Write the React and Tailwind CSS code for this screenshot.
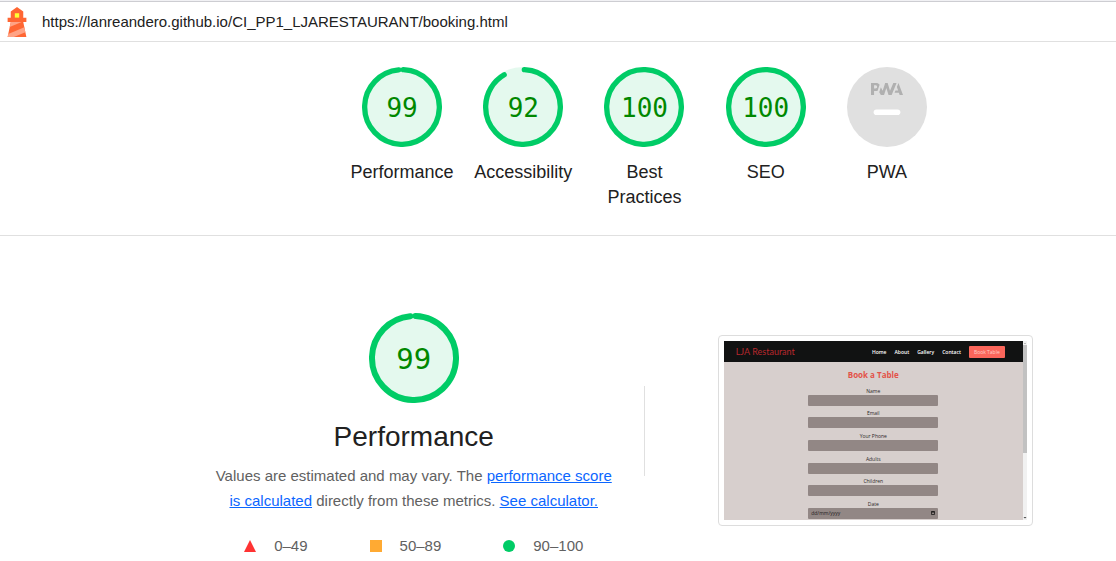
const CIRCUMFERENCE = 2 * Math.PI * 56;

const categories = [
  { label: "Performance", score: 99 },
  { label: "Accessibility", score: 92 },
  { label: "Best Practices", score: 100 },
  { label: "SEO", score: 100 },
];

const fields = [
  { id: "name", label: "Name" },
  { id: "email", label: "Email" },
  { id: "phone", label: "Your Phone" },
  { id: "adults", label: "Adults" },
  { id: "children", label: "Children" },
  { id: "date", label: "Date" },
];

function LighthouseIcon() {
  return (
    <svg viewBox="0 0 48 48" className="size-[30px] shrink-0" aria-hidden="true">
      <path fill="#ff6633" d="m14 7 10-7 10 7v10h5v7h-5l5 24H9l5-24H9v-7h5V7z" />
      <path
        fill="#ffa385"
        d="M31.561 24H14l-1.689 8.105L31.561 24zM18.983 48H9l1.022-4.907L35.723 32.27l1.663 7.98L18.983 48z"
      />
      <path fill="#ffff33" d="M20.5 10h7v7h-7z" />
    </svg>
  );
}

function Gauge({ score, large }) {
  const full = score === 100;
  const arc = full ? CIRCUMFERENCE : (score / 100) * CIRCUMFERENCE - 4;
  return (
    <div className={large ? "grid size-[90px]" : "grid size-20"}>
      <svg viewBox="0 0 120 120" className="col-start-1 row-start-1 size-full" aria-hidden="true">
        <circle cx="60" cy="60" r="56" fill="#00cc66" stroke="#00cc66" strokeWidth="8" opacity="0.1" />
        <circle
          cx="60"
          cy="60"
          r="56"
          fill="none"
          stroke="#00cc66"
          strokeWidth="8"
          strokeLinecap="round"
          strokeDasharray={`${arc} ${CIRCUMFERENCE}`}
          transform="rotate(-87.95 60 60)"
        />
      </svg>
      <span
        className={
          large
            ? "col-start-1 row-start-1 self-center pt-0.5 text-center font-['DejaVu_Sans_Mono',monospace] text-[29px] leading-8 text-[#008800]"
            : "col-start-1 row-start-1 self-center pt-0.5 text-center font-['DejaVu_Sans_Mono',monospace] text-[26px] leading-8 text-[#008800]"
        }
      >
        {score}
      </span>
    </div>
  );
}

function PwaGauge() {
  return (
    <svg viewBox="0 0 60 60" className="size-20" aria-hidden="true">
      <circle cx="30" cy="30" r="30" fill="#e0e0e0" />
      <g fill="#b0b0b0">
        <path d="M35.66 19.39l.7-1.75h2L37.4 15 38.6 12l3.4 9h-2.51l-.58-1.61z" />
        <path d="M33.52 21l3.65-9h-2.42l-2.5 5.82L30.5 12h-1.86l-1.9 5.82-1.35-2.65-1.21 3.72L25.4 21h2.38l1.72-5.2 1.64 5.2z" />
        <path
          fillRule="nonzero"
          d="M20.3 17.91h1.48c.45 0 .85-.05 1.2-.15l.39-1.18 1.07-3.3a2.64 2.64 0 0 0-.28-.37c-.55-.6-1.36-.91-2.42-.91H18v9h2.3V17.9zm1.96-3.84c.22.22.33.5.33.87 0 .36-.1.65-.29.87-.2.23-.59.35-1.15.35h-.86v-2.41h.87c.52 0 .89.1 1.1.32z"
        />
      </g>
      <rect x="20" y="31.8" width="20" height="4.2" rx="2.1" fill="#ffffff" />
    </svg>
  );
}

function Category({ label, children }) {
  return (
    <a href="#performance" className="flex flex-col items-center gap-[13px] px-2 text-center text-lg leading-[25px] text-[#212121]">
      {children}
      <span>{label}</span>
    </a>
  );
}

function PagePreview() {
  return (
    <div className="w-[315px] rounded border border-[#dddddd] p-[5px] font-['Open_Sans',sans-serif] text-[5px] leading-[6px]">
      <div className="flex bg-[#d7cfcd]">
        <div className="min-w-0 flex-1">
          <header className="flex h-[21px] items-center justify-between bg-[#111212] pr-[18px] pl-3">
            <span className="font-[Lato,sans-serif] text-[9px] leading-3 text-[#b8282d]">LJA Restaurant</span>
            <nav className="flex items-center gap-2 font-semibold text-white">
              <a href="#home">Home</a>
              <a href="#about">About</a>
              <a href="#gallery">Gallery</a>
              <a href="#contact">Contact</a>
              <a href="#book" className="rounded-[1px] bg-[#fb665b] px-[5px] py-[3px] font-normal text-[#ffd0c8]">
                Book Table
              </a>
            </nav>
          </header>
          <h3 className="pt-2 pb-[3px] text-center text-[8px] leading-[10px] font-bold text-[#e35349]">
            Book a Table
          </h3>
          <form className="mx-auto grid h-[137px] w-[130px] grid-rows-6 pb-px">
            {fields.map((field) => (
              <div key={field.id} className="flex flex-col justify-end gap-px text-center text-[#2c2828]">
                <label htmlFor={field.id}>{field.label}</label>
                {field.id === "date" ? (
                  <div className="flex h-[11px] items-center justify-between rounded-[1px] bg-[#928785] px-[3px]">
                    <input
                      id="date"
                      type="text"
                      placeholder="dd/mm/yyyy"
                      className="w-12 leading-[6px] placeholder:text-[#1f1c1c]"
                    />
                    <svg viewBox="0 0 8 8" className="size-1" aria-hidden="true">
                      <path d="M1 1h6v6H1z" fill="none" stroke="#111111" strokeWidth="1.5" />
                      <path d="M1 1h6v2H1z" fill="#111111" />
                    </svg>
                  </div>
                ) : (
                  <input id={field.id} type="text" className="h-[11px] w-full rounded-[1px] bg-[#928785]" />
                )}
              </div>
            ))}
          </form>
        </div>
        <div className="flex w-1 flex-col justify-between bg-[#f1f1f1]">
          <svg viewBox="0 0 4 4" className="size-1" aria-hidden="true">
            <path d="M1 3h2L2 2z" fill="#888888" />
          </svg>
          <div className="mb-auto h-[108px] bg-[#c1c1c1]" />
          <svg viewBox="0 0 4 4" className="size-1" aria-hidden="true">
            <path d="M.5 1h3L2 2.5z" fill="#444444" />
          </svg>
        </div>
      </div>
    </div>
  );
}

export default function App() {
  return (
    <div className="border-t border-[#f1f1f4] bg-white font-['Liberation_Sans',Arial,sans-serif]">
      <header className="flex h-[41px] items-center gap-[10px] border-t border-b border-t-[#cdcdd2] border-b-[#e0e0e0] pl-0.5">
        <LighthouseIcon />
        <a href="https://lanreandero.github.io/CI_PP1_LJARESTAURANT/booking.html" className="text-[15px] leading-5 text-[#212121]">
          https://lanreandero.github.io/CI_PP1_LJARESTAURANT/booking.html
        </a>
      </header>

      <section className="border-b border-[#e0e0e0] py-[25px] pl-[173px]">
        <div className="mx-auto grid w-full max-w-[606px] grid-cols-5">
          {categories.map((category) => (
            <Category key={category.label} label={category.label}>
              <Gauge score={category.score} />
            </Category>
          ))}
          <Category label="PWA">
            <PwaGauge />
          </Category>
        </div>
      </section>

      <main id="performance" className="pt-[69px] pl-[173px]">
        <div className="mx-auto grid w-full max-w-[922px] grid-cols-[1fr_1px_1fr] items-center">
          <section className="flex flex-col items-center pt-2">
            <Gauge score={99} large />
            <h1 className="mt-4 mb-2 text-[28px] leading-9 text-[#212121]">Performance</h1>
            <p className="max-w-[400px] text-center text-[15px] leading-[25px] text-[#616161]">
              Values are estimated and may vary. The{" "}
              <a href="#scoring" className="text-[#0b66ff] underline">
                performance score is calculated
              </a>{" "}
              directly from these metrics.{" "}
              <a href="#calculator" className="text-[#0b66ff] underline">
                See calculator.
              </a>
            </p>
            <div className="mt-[23px] flex gap-[62px] text-[15px] leading-5 text-[#616161]">
              <span className="flex items-center gap-[18px]">
                <svg viewBox="0 0 12 12" className="size-3" aria-hidden="true">
                  <path d="M6 0l6 12H0z" fill="#ff3333" />
                </svg>
                0–49
              </span>
              <span className="flex items-center gap-[18px]">
                <span className="size-3 bg-[#ffaa33]" />
                50–89
              </span>
              <span className="flex items-center gap-[18px]">
                <span className="size-3 rounded-full bg-[#00cc66]" />
                90–100
              </span>
            </div>
          </section>
          <div className="h-[90px] bg-[#e0e0e0]" />
          <div className="flex justify-center">
            <PagePreview />
          </div>
        </div>
      </main>
    </div>
  );
}
